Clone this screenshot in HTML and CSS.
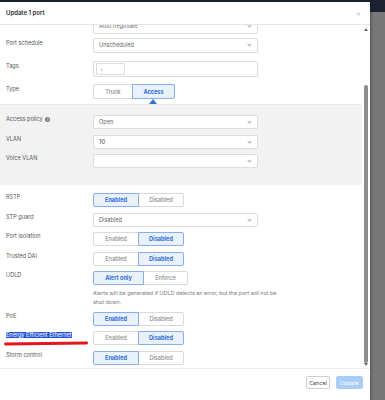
FILE: index.html
```html
<!DOCTYPE html>
<html>
<head>
  <title>Update 1 port</title>
  <link rel="stylesheet" href="styles.css">
</head>
<body>

<div class="backdrop">
  <div class="modal">
    <div class="modal-head">
      <span class="title">Update 1 port</span>
      <span class="close">&times;</span>
    </div>

    <div class="modal-body">
      <div class="scroll">
        <!-- top section, scrolled a little -->
        <div class="stack top">
          <div class="row first">
            <div class="label"></div>
            <div class="select">Auto negotiate<span class="caret"></span></div>
          </div>
          <div class="row">
            <div class="label">Port schedule</div>
            <div class="select">Unscheduled<span class="caret"></span></div>
          </div>
          <div class="row">
            <div class="label">Tags</div>
            <div class="tags"><span class="chip">+</span></div>
          </div>
          <div class="row">
            <div class="label">Type</div>
            <div class="seg tall">
              <span class="opt w39">Trunk</span>
              <span class="opt w42 on">Access</span>
            </div>
          </div>
        </div>

        <div class="pointer"><span class="tri"></span></div>

        <div class="stack access">
          <div class="row">
            <div class="label">Access policy <span class="info">i</span></div>
            <div class="select">Open<span class="caret"></span></div>
          </div>
          <div class="row">
            <div class="label">VLAN</div>
            <div class="select dark">10<span class="caret"></span></div>
          </div>
          <div class="row">
            <div class="label">Voice VLAN</div>
            <div class="select"><span class="caret"></span></div>
          </div>
        </div>

        <div class="stack bottom">
          <div class="row">
            <div class="label">RSTP</div>
            <div class="seg">
              <span class="opt on">Enabled</span>
              <span class="opt">Disabled</span>
            </div>
          </div>
          <div class="row">
            <div class="label">STP guard</div>
            <div class="select">Disabled<span class="caret"></span></div>
          </div>
          <div class="row">
            <div class="label">Port isolation</div>
            <div class="seg">
              <span class="opt">Enabled</span>
              <span class="opt on">Disabled</span>
            </div>
          </div>
          <div class="row">
            <div class="label">Trusted DAI</div>
            <div class="seg">
              <span class="opt">Enabled</span>
              <span class="opt on">Disabled</span>
            </div>
          </div>
          <div class="row">
            <div class="label">UDLD</div>
            <div class="control">
              <div class="seg">
                <span class="opt w50 on">Alert only</span>
                <span class="opt w44">Enforce</span>
              </div>
              <p class="help">Alerts will be generated if UDLD detects an error, but the port will not be shut down.</p>
            </div>
          </div>
          <div class="row">
            <div class="label">PoE</div>
            <div class="seg">
              <span class="opt on">Enabled</span>
              <span class="opt">Disabled</span>
            </div>
          </div>
          <div class="row">
            <div class="label">
              <span class="picked">Energy Efficient Ethernet</span>
              <div class="scribble"></div>
            </div>
            <div class="seg">
              <span class="opt">Enabled</span>
              <span class="opt on">Disabled</span>
            </div>
          </div>
          <div class="row">
            <div class="label">Storm control</div>
            <div class="seg">
              <span class="opt on">Enabled</span>
              <span class="opt">Disabled</span>
            </div>
          </div>
        </div>
      </div>

      <div class="scrollbar">
        <span class="arrow up"></span>
        <span class="thumb"></span>
        <span class="arrow down"></span>
      </div>
    </div>

    <div class="modal-foot">
      <button class="btn cancel">Cancel</button>
      <button class="btn update" disabled>Update</button>
    </div>
  </div>
</div>

</body>
</html>
```

FILE: styles.css
```css
html, body {
  margin: 0;
  height: 100%;
  overflow: hidden;
}

body {
  font-family: Inter, "Open Sans", sans-serif;
  font-size: 5.6px;
  color: #555;
  background: linear-gradient(#1c2232 0 12px, #787878 12px);
}

.backdrop {
  padding-top: 2px;
}

.modal {
  width: 370px;
  height: 398px;
  background: #fff;
  display: flex;
  flex-direction: column;
  box-shadow: 1px 0 3px rgba(0,0,0,0.35);
}

/* header */
.modal-head {
  height: 22px;
  flex: none;
  display: flex;
  align-items: center;
  justify-content: space-between;
  padding: 0 9px 0 6px;
  border-bottom: 1px solid #e6e6e6;
}

.title {
  font-size: 6px;
  font-weight: 600;
  color: #2b2b2b;
  margin-top: -1px;
}

.close {
  font-size: 8px;
  color: #c4c4c4;
}

/* body */
.modal-body {
  flex: 1;
  display: flex;
  min-height: 0;
  border-bottom: 1px solid #ececec;
}

.scroll {
  flex: 1;
  overflow: hidden;
}

.stack {
  display: flex;
  flex-direction: column;
  padding-left: 6px;
}

.row {
  display: flex;
  align-items: flex-start;
}

.label {
  width: 87px;
  flex: none;
  line-height: 8px;
  color: #575757;
}

.top .row { margin-bottom: 7px; }
.top .row.first { margin-top: -6px; margin-bottom: 4px; }
.top .row:nth-child(2) { margin-bottom: 8px; }
.top .row:last-child { margin-bottom: 0; }
.top .label { padding-top: 1px; }

.pointer {
  height: 5px;
  padding-left: 149px;
}

.tri {
  display: block;
  width: 0;
  height: 0;
  border-left: 4px solid transparent;
  border-right: 4px solid transparent;
  border-bottom: 5px solid #2f73d8;
}

.access {
  background: #f2f2f2;
  border-top: 1px solid #e8e8e8;
  padding-top: 10px;
  padding-bottom: 17px;
  gap: 5.5px;
}

.bottom {
  padding-top: 8px;
  gap: 5.5px;
}

.info {
  display: inline-block;
  width: 5px;
  height: 5px;
  border-radius: 50%;
  background: #777;
  color: #fff;
  font-size: 4px;
  line-height: 5px;
  text-align: center;
  font-weight: 700;
  vertical-align: 0;
  margin-left: 1px;
}

/* inputs */
.select {
  position: relative;
  width: 165px;
  height: 14px;
  box-sizing: border-box;
  border: 1px solid #dcdcdc;
  border-radius: 2px;
  background: #fff;
  padding-left: 5px;
  line-height: 12px;
  color: #666;
}

.top .select { height: 15px; line-height: 13px; }

.select.dark { color: #444; font-size: 6px; }

.caret {
  position: absolute;
  right: 6px;
  top: 4px;
  width: 2px;
  height: 2px;
  border-right: 1px solid #aaa;
  border-bottom: 1px solid #aaa;
  transform: rotate(45deg);
}

.tags {
  width: 165px;
  height: 16px;
  box-sizing: border-box;
  border: 1px solid #dcdcdc;
  border-radius: 2px;
  padding: 1px 2px;
}

.chip {
  display: block;
  width: 29px;
  height: 12px;
  box-sizing: border-box;
  border: 1px solid #dcdcdc;
  border-radius: 1px;
  padding-left: 3px;
  line-height: 10px;
  color: #888;
  font-size: 5px;
}

/* segmented buttons */
.seg {
  display: flex;
  height: 14px;
}

.seg.tall { height: 15px; }

.opt {
  width: 46px;
  box-sizing: border-box;
  border: 1px solid #d9d9d9;
  background: #fff;
  color: #8a8a8a;
  font-weight: 500;
  display: flex;
  align-items: center;
  justify-content: center;
}

.opt + .opt { margin-left: -1px; }
.opt:first-child { border-radius: 2px 0 0 2px; }
.opt:last-child { border-radius: 0 2px 2px 0; }

.opt.on {
  position: relative;
  border-color: #86aeea;
  background: #e9f1fd;
  color: #2f6fd4;
  font-weight: 700;
}

.w39 { width: 40px; }
.w42 { width: 43px; }
.w50 { width: 51px; }
.w44 { width: 45px; }

.control {
  display: flex;
  flex-direction: column;
}

.help {
  margin: 4px 0 0;
  width: 192px;
  font-size: 5.4px;
  line-height: 8.5px;
  color: #7a7a7a;
}

.picked {
  background: #2354cf;
  color: #fff;
}

.scribble {
  width: 84px;
  height: 2.5px;
  margin: 3px 0 0 -2px;
  background: #e3161e;
  border-radius: 2px;
  transform: rotate(-0.6deg);
}

/* fake scrollbar */
.scrollbar {
  width: 8px;
  flex: none;
  display: flex;
  flex-direction: column;
  align-items: center;
}

.arrow {
  width: 0;
  height: 0;
  border-left: 2.5px solid transparent;
  border-right: 2.5px solid transparent;
}

.arrow.up {
  margin-top: 3px;
  border-bottom: 3px solid #6a6a6a;
}

.arrow.down {
  margin-top: auto;
  margin-bottom: 2px;
  border-top: 3px solid #6a6a6a;
}

.thumb {
  width: 4.5px;
  height: 280px;
  margin-top: 54px;
  border-radius: 3px;
  background: #8c8c8c;
}

/* footer */
.modal-foot {
  flex: none;
  height: 24px;
  display: flex;
  justify-content: flex-end;
  align-items: flex-start;
  gap: 6px;
  padding: 7px 7px 0 0;
}

.btn {
  height: 13px;
  padding: 0;
  font-family: inherit;
  font-size: 5.4px;
  border-radius: 2px;
}

.cancel {
  width: 24px;
  border: 1px solid #cfcfcf;
  background: #fff;
  color: #444;
}

.update {
  width: 27px;
  border: 1px solid #a9cdf4;
  background: #a9cdf4;
  color: #fff;
}
```
